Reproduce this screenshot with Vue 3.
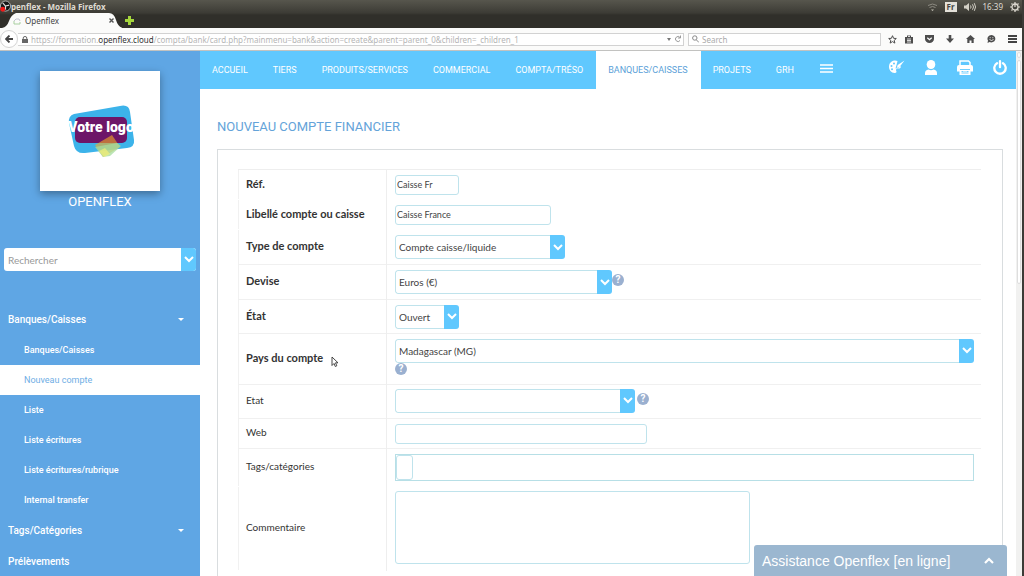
<script setup>
import { ref } from 'vue'

const nav = ['ACCUEIL', 'TIERS', 'PRODUITS/SERVICES', 'COMMERCIAL', 'COMPTA/TRÉSO', 'BANQUES/CAISSES', 'PROJETS', 'GRH']
const activeNav = 'BANQUES/CAISSES'

const menu = [
  { title: 'Banques/Caisses', caret: true, items: ['Banques/Caisses', 'Nouveau compte', 'Liste', 'Liste écritures', 'Liste écritures/rubrique', 'Internal transfer'] },
  { title: 'Tags/Catégories', caret: true, items: [] },
  { title: 'Prélèvements', caret: false, items: [] },
]
const activeItem = 'Nouveau compte'

const rows = [
  { id: 'ref', label: 'Réf.', required: true, kind: 'input', size: 'xs', value: 'Caisse Fr', join: true },
  { id: 'name', label: 'Libellé compte ou caisse', required: true, kind: 'input', size: 'md', value: 'Caisse France', join: true },
  { id: 'type', label: 'Type de compte', required: true, kind: 'select', size: 'kind', value: 'Compte caisse/liquide' },
  { id: 'currency', label: 'Devise', required: true, kind: 'select', size: 'money', value: 'Euros (€)', help: true },
  { id: 'status', label: 'État', required: true, kind: 'select', size: 'xs', value: 'Ouvert' },
  { id: 'country', label: 'Pays du compte', required: true, kind: 'select', size: 'full', value: 'Madagascar (MG)', help: true },
  { id: 'state', label: 'Etat', kind: 'select', size: 'region', value: '', help: true },
  { id: 'web', label: 'Web', kind: 'input', size: 'link', value: '' },
  { id: 'tags', label: 'Tags/catégories', kind: 'tags', value: '', join: true },
  { id: 'comment', label: 'Commentaire', kind: 'textarea', value: '', join: true },
]
const form = ref(Object.fromEntries(rows.map((r) => [r.id, r.value])))
const search = ref('')
const webSearch = ref('')
</script>

<template>
  <div class="screen">
    <header class="chrome">
      <div class="titlebar">
        <svg class="rec" viewBox="0 0 12 13" aria-hidden="true">
          <circle cx="6" cy="6" r="5.5" fill="#151515" stroke="#ddd" stroke-width=".8" />
          <path d="M6 6 3 2.500M6 6l4-1M6 6l0 4" stroke="#ddd" stroke-width="1.300" />
          <circle cx="3" cy="9.500" r="2.700" fill="#f01818" />
        </svg>
        <span class="window-title">penflex - Mozilla Firefox</span>
        <div class="tray">
          <svg width="11" height="10" viewBox="0 0 11 10" fill="none" stroke="#8d8b82"><path d="M1 3.500q4.500-3 9 0M2.500 5.500q3-2 6 0" /><path d="M4 7.500h3L5.500 9z" fill="#c9c6bb" stroke="none" /></svg>
          <span class="lang">Fr</span>
          <svg width="12" height="10" viewBox="0 0 12 10" fill="none" stroke="#d3d0c6"><path d="M0 3.500h2L5 1v8L2 6.500H0z" fill="#d3d0c6" stroke="none" /><path d="M6.500 3.500q1.200 1.500 0 3M8.500 2.300q2 2.700 0 5.400M10.300 1.200q2.500 3.800 0 7.600" /></svg>
          <span class="clock">16:39</span>
          <svg width="10" height="10" viewBox="0 0 10 10" fill="none" stroke="#dfdbd2"><circle cx="5" cy="5" r="3" stroke-width="1.300" /><path d="M5 0v5M5 8v2M0 5h2M8 5h2M1.500 1.500l1 1M8.500 1.500l-1 1M1.500 8.500l1-1M8.500 8.500l-1-1" stroke-width="1.200" /></svg>
        </div>
      </div>
      <div class="tabs">
        <div class="tab">
          <svg class="tab-edge" viewBox="0 0 120 15" preserveAspectRatio="none" aria-hidden="true"><path d="M0 15Q5 14 7 8T14 0H107Q112 0 114 7T121 15z" fill="#fbfbfa" /></svg>
          <svg class="favicon" width="8" height="8" viewBox="0 0 8 8" fill="none"><path d="M1 4 3 2h3l1 2" stroke="#c3c4d0" /><path d="M1 4v3h6V5" stroke="#a9cfa0" /></svg>
          <span class="tab-name">Openflex</span>
          <button class="plain" aria-label="Fermer l’onglet"><svg width="5" height="5" viewBox="0 0 5 5" stroke="#555" stroke-width="1.400"><path d="M.5.500l4 4M4.500.500l-4 4" /></svg></button>
        </div>
        <button class="plain add" aria-label="Nouvel onglet"><svg width="9" height="9" viewBox="0 0 9 9"><path d="M3 0h3v3h3v3H6v3H3V6H0V3h3z" fill="#a5d63c" /></svg></button>
      </div>
      <div class="toolbar">
        <button class="back" aria-label="Retour"><svg width="8" height="8" viewBox="0 0 8 8" fill="none" stroke="#444" stroke-width="1.800"><path d="M4.500.500 1 4l3.500 3.500M1 4h7" /></svg></button>
        <div class="url">
          <svg width="6" height="7" viewBox="0 0 6 7"><path d="M0 3h6v4H0z" fill="#666" /><path d="M1.200 3.500V2a1.800 1.500 0 0 1 3.600 0v1.500" fill="none" stroke="#666" /></svg>
          <span class="address">https://formation.<b>openflex.cloud</b>/compta/bank/card.php?mainmenu=bank&amp;action=create&amp;parent=parent_0&amp;children=_children_1</span>
          <svg width="4" height="3" viewBox="0 0 4 3"><path d="M0 0h4L2 3z" fill="#777" /></svg>
          <svg width="7" height="8" viewBox="0 0 7 8" fill="none" stroke="#999"><path d="M6 2.500A2.500 2.500 0 1 0 6 5.500M6.500.500v2.500H4" /></svg>
        </div>
        <label class="web-search">
          <svg width="7" height="8" viewBox="0 0 7 8" fill="none" stroke="#888"><circle cx="2.800" cy="3" r="2.200" /><path d="M4.500 5 7 7.500" /></svg>
          <input v-model="webSearch" type="text" placeholder="Search" aria-label="Search" />
        </label>
        <div class="tools">
          <svg width="9" height="9" viewBox="0 0 9 9"><path d="M4.500.700 5.600 3.300l2.700.200L6.200 5.400l.700 2.700-2.400-1.500-2.400 1.500.7-2.700L.7 3.500l2.700-.2z" fill="none" stroke="#4d4d4d" /></svg>
          <svg width="8" height="9" viewBox="0 0 8 9"><path d="M0 2h2V.500h4V2h2v6.500H0z" fill="#4d4d4d" /><path d="M3 1.500h2M2 4h4M2 5.500h4M2 7h4" stroke="#fff" stroke-width=".8" /></svg>
          <svg width="9" height="8" viewBox="0 0 9 8"><path d="M0 0h9v4a4.500 4 0 0 1-9 0z" fill="#4d4d4d" /><path d="m2.300 2.700 2.200 2 2.200-2" fill="none" stroke="#fff" stroke-width="1.200" /></svg>
          <svg width="8" height="8" viewBox="0 0 8 8"><path d="M2.700 0h2.600v3.500H8L4 8 0 3.500h2.700z" fill="#4d4d4d" /></svg>
          <svg width="9" height="8" viewBox="0 0 9 8"><path d="m4.500 0 4.500 4H7.700v4H5.500V5.500h-2V8H1.300V4H0z" fill="#4d4d4d" /></svg>
          <svg width="9" height="8" viewBox="0 0 9 8"><path d="M4.500 0a4 3.700 0 1 1-2 7L.5 8 1 5.500A4 3.700 0 0 1 4.500 0z" fill="#4d4d4d" /><path d="M2.500 4.500q2 2 4 0M2.700 2.700h1M5.300 2.700h1" fill="none" stroke="#fff" stroke-width=".8" /></svg>
          <svg width="9" height="8" viewBox="0 0 9 8"><path d="M0 1h9M0 4h9M0 7h9" stroke="#444" stroke-width="1.800" /></svg>
        </div>
      </div>
    </header>

    <div class="page">
      <aside class="sidebar">
        <div class="logo">
          <svg viewBox="0 0 120 120" role="img" aria-label="Votre logo">
            <path d="M34 43 80 35Q89 33 90 41L94 69Q95 76 87 77L45 82Q36 83 34 75L29 52Q28 45 34 43z" fill="#3cb3ea" />
            <rect x="35" y="46" width="52" height="26" rx="5" fill="#6d1668" />
            <path d="m55 74 17-10 8 12-17 10z" fill="#f5ad23" opacity=".6" />
            <path d="m55 76 22-4 4 3-11 10-7 1z" fill="#a6dc9c" opacity=".75" />
            <path d="m59 80 5 6 6-3-5-6z" fill="#f4ef77" opacity=".7" />
            <text x="61" y="61" text-anchor="middle" class="logo-text">Votre logo</text>
          </svg>
        </div>
        <p class="brand">OPENFLEX</p>
        <div class="side-search">
          <input v-model="search" type="text" placeholder="Rechercher" aria-label="Rechercher" />
          <button class="arrow" aria-label="Options de recherche"><svg width="10" height="7" viewBox="0 0 10 7"><path d="m1 1 4 4 4-4" /></svg></button>
        </div>
        <nav class="menu">
          <template v-for="group in menu" :key="group.title">
            <a href="#" class="group"><span>{{ group.title }}</span><i v-if="group.caret" class="caret"></i></a>
            <a v-for="item in group.items" :key="item" href="#" class="item" :class="{ active: item === activeItem }">{{ item }}</a>
          </template>
        </nav>
      </aside>

      <main class="content">
        <nav class="topnav">
          <a v-for="entry in nav" :key="entry" href="#" :class="{ active: entry === activeNav }">{{ entry }}</a>
          <button class="plain burger" aria-label="Menu"><svg width="13" height="9" viewBox="0 0 13 9"><path d="M0 1h13M0 4.500h13M0 8h13" stroke="#fff" stroke-width="1.300" /></svg></button>
          <div class="actions">
            <button class="plain" aria-label="Thème"><svg width="17" height="14" viewBox="0 0 17 14"><path d="M9.500 1A6 6 0 0 0 1 6.500 6 6 0 0 0 6.500 13c2 .3 2.300-1 1.700-2.200C7.500 9 9 8.500 10.500 8.500c2 0 2.500-1 2.200-2.500L10 8 7.500 8.500 8.500 5z" fill="#fff" /><path d="M16.500.500 11.500 7l-2.800 1 1-3z" fill="#fff" /><g fill="#60c8fe"><circle cx="6" cy="3.500" r="1" /><circle cx="3.500" cy="6" r="1" /><circle cx="4" cy="9.200" r="1" /></g></svg></button>
            <button class="plain" aria-label="Utilisateur"><svg width="12" height="15" viewBox="0 0 12 15" fill="#fff"><ellipse cx="6" cy="4.500" rx="4.300" ry="4.500" /><path d="M0 15v-2q0-3 3.500-3.500 2.500 1.500 5 0Q12 10 12 13v2z" /></svg></button>
            <button class="plain" aria-label="Imprimer"><svg width="16" height="15" viewBox="0 0 16 15"><path d="M3 5V1h8.500L13 2.500V5" fill="none" stroke="#fff" stroke-width="1.500" /><path d="M2 5h12q2 0 2 2v4.500h-2.500V15h-11v-3.500H0V7q0-2 2-2z" fill="#fff" /><path d="M3 9.500h10M4.500 11.500h2M7.500 11.500h1M9.500 11.500h2M4.500 13h7" stroke="#60c8fe" stroke-width=".9" /></svg></button>
            <button class="plain" aria-label="Déconnexion"><svg width="14" height="15" viewBox="0 0 14 15" fill="none" stroke="#fff" stroke-width="2.300" stroke-linecap="round"><path d="M4 3.200a5.700 5.700 0 1 0 6 0M7 1.200v6" /></svg></button>
          </div>
        </nav>

        <h1>NOUVEAU COMPTE FINANCIER</h1>

        <form class="panel" @submit.prevent>
          <table>
            <tbody>
              <tr v-for="row in rows" :key="row.id" :class="[row.id, { join: row.join }]">
                <th scope="row"><label :for="row.id" :class="{ required: row.required }">{{ row.label }}</label></th>
                <td>
                  <div class="field">
                    <input v-if="row.kind === 'input'" :id="row.id" v-model="form[row.id]" type="text" :class="row.size" />
                    <span v-else-if="row.kind === 'select'" class="select" :class="row.size">
                      <select :id="row.id" v-model="form[row.id]"><option :value="row.value">{{ row.value }}</option></select>
                      <span class="arrow"><svg width="10" height="7" viewBox="0 0 10 7"><path d="m1 1 4 4 4-4" /></svg></span>
                    </span>
                    <div v-else-if="row.kind === 'tags'" class="tag-box"><input :id="row.id" v-model="form[row.id]" type="text" /></div>
                    <textarea v-else :id="row.id" v-model="form[row.id]"></textarea>
                    <button v-if="row.help" type="button" class="help" aria-label="Aide">?</button>
                  </div>
                </td>
              </tr>
            </tbody>
          </table>
        </form>
      </main>

      <div class="scrollbar"><i></i><i class="thumb"></i></div>
    </div>

    <button class="chat"><span>Assistance Openflex [en ligne]</span><svg width="10" height="7" viewBox="0 0 10 7" fill="none" stroke="#fff" stroke-width="2.200"><path d="m1 6 4-4 4 4" /></svg></button>
    <svg class="cursor" width="8" height="12" viewBox="0 0 8 12"><path d="M1 1v8.500l2-2 1.300 3 1.500-.7-1.300-3H7z" fill="#fff" stroke="#333" stroke-width=".9" /></svg>
  </div>
</template>

<style>
html, body { background: #fff; }
body { overflow: hidden; }
</style>

<style scoped>
* { box-sizing: border-box; }
a { color: inherit; text-decoration: none; }
svg { display: block; flex: none; }
.screen {
  display: flex;
  flex-direction: column;
  height: 100vh;
  overflow: hidden;
  position: relative;
  border-right: 2px solid #3c3b37;
  font-family: Lato, "Noto Sans", sans-serif;
  font-size: 10px;
  color: #333;
}
.plain { border: 0; padding: 0; background: none; }

.chrome {
  flex: none;
  font-family: "Noto Sans", sans-serif;
  background: linear-gradient(#57564d 0, #3c3b35 13px, #302f2a 15px, #302f2a 28px);
  margin-right: -2px;
}
.titlebar { display: flex; align-items: center; height: 13px; color: #dfdbd2; font-size: 8px; line-height: 13px; }
.rec { width: 11px; height: 13px; }
.window-title { font-weight: 700; }
.tray { margin-left: auto; display: flex; align-items: center; gap: 7px; padding-right: 4px; }
.lang { background: #e4e1d9; color: #444; font-weight: 700; line-height: 10px; padding: 0 2px; }
.tabs { display: flex; height: 15px; padding-left: 2px; align-items: center; }
.tab { position: relative; width: 120px; height: 15px; padding: 0 8px 0 11px; display: flex; align-items: center; gap: 4px; color: #444; font-size: 8px; }
.tab-edge { position: absolute; inset: 0; width: 100%; height: 100%; }
.tab > *:not(.tab-edge) { position: relative; }
.tab .plain { margin-left: auto; }
.add { margin-left: 3px; }
.toolbar { display: flex; align-items: center; height: 23px; background: #fbfbfa; border-bottom: 1px solid #c2c2c0; padding-right: 7px; font-size: 8px; color: #b5b5b5; }
.back { width: 18px; height: 18px; border: 1px solid #d4d4d4; border-radius: 9px; background: #fff; display: grid; place-items: center; padding: 0; }
.url { flex: 1; min-width: 0; height: 13px; border: 1px solid #d2d2d2; border-left: 0; display: flex; align-items: center; gap: 3px; padding: 0 2px 0 4px; background: #fff; }
.address { flex: 1; overflow: hidden; white-space: nowrap; line-height: 11px; }
.address b { font-weight: 400; color: #333; }
.web-search { width: 193px; height: 13px; margin-left: 4px; border: 1px solid #d2d2d2; display: flex; align-items: center; gap: 3px; padding-left: 3px; background: #fff; }
.web-search input { flex: 1; min-width: 0; border: 0; padding: 0; font: inherit; height: 11px; background: none; outline: 0; }
.web-search input::placeholder { color: #aaa; opacity: 1; }
.tools { display: flex; align-items: center; gap: 12px; margin-left: 7px; }
.tools svg:nth-child(2) { margin-left: -4px; }

.page { flex: 1; min-height: 0; display: flex; }
.sidebar { flex: none; width: 200px; background: #5fa6e4; color: #fff; font-family: Roboto, sans-serif; overflow: hidden; }
.logo { width: 120px; height: 120px; margin: 20px auto 0; background: #fff; box-shadow: 0 3px 8px rgba(0, 0, 0, .35); }
.logo-text { font: 900 14px Roboto, sans-serif; fill: #fff; }
.brand { margin: 3px 0 0; text-align: center; font-size: 13px; line-height: 16px; }
.side-search { display: flex; height: 23px; margin: 38px 4px 0; border-radius: 3px; overflow: hidden; background: #fff; }
.side-search input { flex: 1; min-width: 0; border: 0; padding: 0 4px; background: none; font: 10px Lato, sans-serif; outline: 0; }
.side-search input::placeholder { color: #999; opacity: 1; }
.arrow { width: 15px; border: 0; padding: 0; background: #60c8fe; display: grid; place-items: center; }
.arrow path { fill: none; stroke: #fff; stroke-width: 2; }
.menu { margin-top: 33px; font-weight: 500; }
.group { display: flex; align-items: center; justify-content: space-between; height: 31px; padding: 0 16px 0 8px; font-size: 10px; }
.caret { border: 3px solid transparent; border-top-color: #fff; border-bottom: 0; }
.item { display: flex; align-items: center; height: 30px; padding-left: 24px; font-size: 9px; }
.item.active { background: #fff; color: #70aee5; font-weight: 400; }

.content { flex: 1; min-width: 0; overflow: hidden; }
.topnav { display: flex; height: 38px; background: #60c8fe; color: #fff; font: 9px Roboto, sans-serif; }
.topnav > a { display: flex; align-items: center; padding: 0 13px 0 12px; }
.topnav a.active { background: #fff; color: #5b9fd8; }
.burger { margin-left: 13px; padding-bottom: 4px; }
.actions { margin-left: auto; padding: 0 9px 6px 0; display: flex; align-items: center; gap: 20px; }
h1 { margin: 29px 17px 0; font: 400 13px/18px Roboto, sans-serif; color: #64a3d9; }
.panel { margin: 13px 13px 0 17px; padding: 19px 21px 40px 20px; border: 1px solid #d9dddf; }
table { width: 100%; border-collapse: collapse; border-left: 1px solid #f1f1f1; border-top: 1px solid #eee; }
tr { border-bottom: 1px solid #f0f0f0; height: 34px; }
tr.join { border-bottom-color: transparent; }
tr.ref, tr.name, tr.web { height: 30px; }
tr.type, tr.currency { height: 35px; }
tr.country { height: 51px; }
tr.tags { height: 38px; }
tr.comment { height: 84px; }
th { width: 148px; padding: 0 0 3px 7px; text-align: left; font-weight: 400; border-right: 1px solid #eee; }
.required { font-size: 11px; font-weight: 700; }
td { padding: 0 7px 0 8px; }
.country td { padding-bottom: 5px; }
.state td, .comment td { padding-bottom: 2px; }
.field { display: flex; flex-wrap: wrap; align-items: flex-start; }
.field input, .field select, .field textarea { font: inherit; color: #444; background: #fff; border: 1px solid #bfe3ec; border-radius: 3px; outline: 0; }
.field input { height: 20px; padding: 0 1px; font-size: 9px; }
.select { display: flex; height: 24px; border-radius: 3px; overflow: hidden; }
.select select { flex: 1; min-width: 0; appearance: none; border-right: 0; border-radius: 3px 0 0 3px; padding: 0 3px; }
.xs { width: 64px; }
.md { width: 156px; }
.kind { width: 170px; }
.money { width: 217px; }
.region { width: 240px; }
.link { width: 252px; }
.full { width: 100%; }
.tag-box { width: 100%; height: 27px; border: 1px solid #b7dfe6; }
.field .tag-box input { display: block; width: 17px; height: 25px; }
.field textarea { width: 355px; height: 73px; resize: none; display: block; }
.help { width: 12px; height: 12px; margin-top: 4px; border: 0; border-radius: 6px; padding: 0; background: #9ab0d0; color: #fff; font: 700 10px/12px Roboto, sans-serif; text-align: center; }
.full + .help { margin-top: 0; }
.region + .help { margin-left: 2px; }

.scrollbar { flex: none; width: 6px; background: #f1f1f0; padding: 1px; display: flex; flex-direction: column; gap: 2px; }
.scrollbar i { height: 6px; border: 1px solid #dedede; border-radius: 2px; background: #fafafa; }
.scrollbar .thumb { height: 224px; background: #fff; }
.chat { position: absolute; right: 15px; bottom: 0; width: 253px; height: 31px; display: flex; align-items: center; justify-content: space-between; padding: 0 13px 0 8px; border: 0; border-radius: 3px 3px 0 0; background: #9bb7d0; color: #fff; font: 14px "Liberation Sans", Arial, sans-serif; }
.cursor { position: absolute; left: 331px; top: 356px; }
</style>
